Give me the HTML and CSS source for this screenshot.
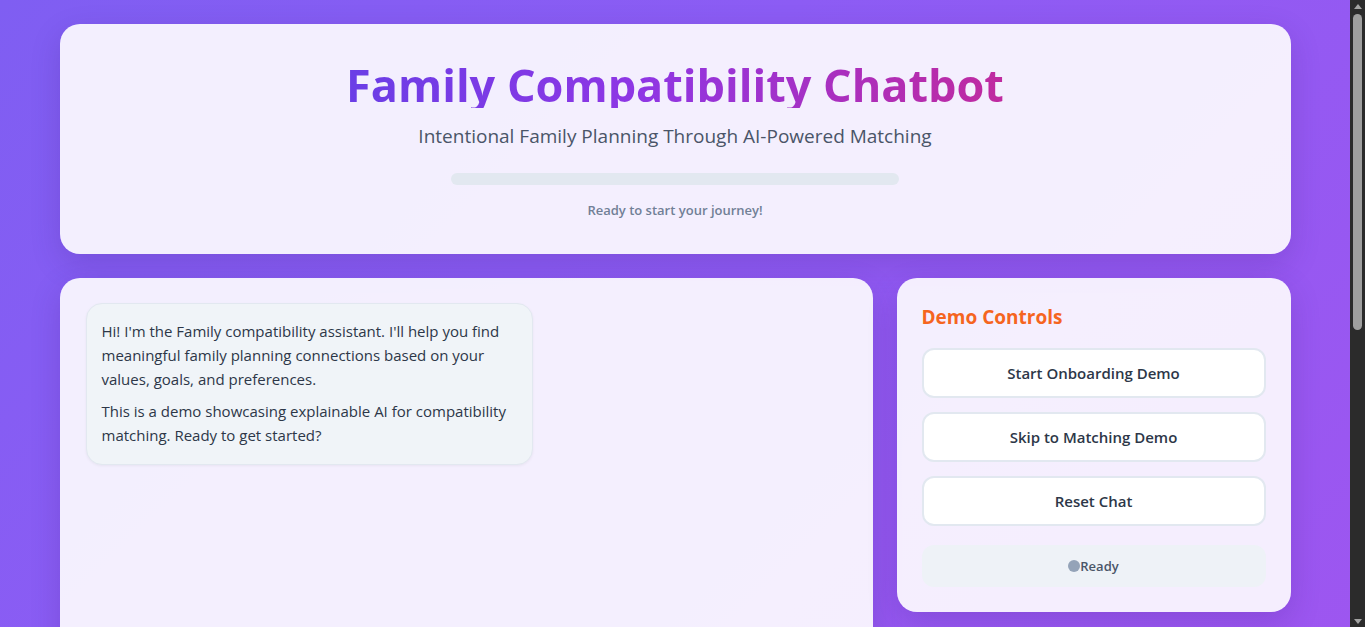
FILE: index.html
```html
<!DOCTYPE html>
<html lang="en">
<head>
<meta charset="utf-8">
<title>Family Compatibility Chatbot</title>
<link rel="stylesheet" href="styles.css">
</head>
<body>
<div class="app">
  <header class="card header">
    <h1 class="title">Family Compatibility Chatbot</h1>
    <p class="subtitle">Intentional Family Planning Through AI-Powered Matching</p>
    <div class="progress"><div class="progress-fill"></div></div>
    <p class="progress-text">Ready to start your journey!</p>
  </header>
  <main class="main">
    <section class="card chat">
      <div class="bubble">
        <p>Hi! I'm the Family compatibility assistant. I'll help you find meaningful family planning connections based on your values, goals, and preferences.</p>
        <p>This is a demo showcasing explainable AI for compatibility matching. Ready to get started?</p>
      </div>
    </section>
    <aside class="card sidebar">
      <h3 class="side-title">Demo Controls</h3>
      <div class="buttons">
        <button class="btn">Start Onboarding Demo</button>
        <button class="btn">Skip to Matching Demo</button>
        <button class="btn">Reset Chat</button>
      </div>
      <div class="status"><span class="dot"></span><span>Ready</span></div>
    </aside>
  </main>
</div>
<div class="scrollbar" aria-hidden="true">
  <span class="arrow arrow-up"></span>
  <span class="thumb"></span>
  <span class="arrow arrow-down"></span>
</div>
</body>
</html>
```
FILE: styles.css
```css
* { box-sizing: border-box; }
html {
  background: #2b2b2b;
}
body {
  margin: 0 15px 0 0;
  min-height: 100vh;
  font-family: "Open Sans", "Noto Sans", sans-serif;
  color: #2d3748;
  background: linear-gradient(135deg, #7f5ef2 0%, #8c5cf4 40%, #9d56f0 100%);
  background-attachment: fixed;
}
.app {
  max-width: 1231px;
  margin: 0 auto;
  padding: 24px 0 40px;
}
.card {
  background: rgba(255, 255, 255, 0.9);
  border-radius: 20px;
  box-shadow: 0 10px 30px rgba(50, 20, 110, 0.18);
}
.header {
  padding: 38px 40px 34px;
  text-align: center;
}
.title {
  display: inline-block;
  margin: 0;
  font-size: 45px;
  font-weight: 700;
  line-height: 46px;
  background: linear-gradient(90deg, #6a3ee6 0%, #8f36e4 45%, #c02a9f 100%);
  -webkit-background-clip: text;
  background-clip: text;
  color: transparent;
}
.subtitle {
  margin: 15px 0 0;
  font-size: 19px;
  line-height: 26px;
  color: #4a5568;
}
.progress {
  width: 448px;
  height: 12px;
  margin: 24px auto 0;
  border-radius: 6px;
  background: #e2e8f0;
  overflow: hidden;
}
.progress-fill { width: 0; height: 100%; }
.progress-text {
  margin: 15px 0 0;
  font-size: 13px;
  line-height: 20px;
  font-weight: 600;
  color: #718096;
}
.main {
  margin-top: 24px;
  display: grid;
  grid-template-columns: 1fr 394px;
  gap: 24px;
  align-items: start;
}
.chat {
  min-height: 880px;
  padding: 25px 26px;
}
.bubble {
  max-width: 447px;
  padding: 15px 15px 17px;
  background: #f0f4f8;
  border: 1px solid #e2e8f0;
  border-radius: 16px;
  box-shadow: 0 1px 3px rgba(0, 0, 0, 0.05);
  font-size: 15px;
  line-height: 24px;
  color: #2d3748;
}
.bubble p { margin: 0; }
.bubble p + p { margin-top: 8px; }
.sidebar {
  padding: 24px 25px 25px;
}
.side-title {
  margin: 0 0 15px;
  font-size: 19px;
  line-height: 31px;
  font-weight: 700;
  color: #f5651f;
}
.buttons {
  display: flex;
  flex-direction: column;
  gap: 14px;
}
.btn {
  height: 50px;
  border: 2px solid #e2e8f0;
  border-radius: 12px;
  background: #ffffff;
  font-family: inherit;
  font-size: 15px;
  font-weight: 600;
  color: #2d3748;
}
.status {
  margin-top: 19px;
  height: 42px;
  border-radius: 12px;
  background: #eef2f7;
  display: flex;
  align-items: center;
  justify-content: center;
  font-size: 13px;
  font-weight: 600;
  color: #4a5568;
}
.dot {
  width: 12px;
  height: 12px;
  border-radius: 50%;
  background: #94a3b8;
}
.scrollbar {
  position: fixed;
  top: 0;
  right: 0;
  width: 15px;
  height: 100vh;
  background: #2b2b2b;
  display: flex;
  flex-direction: column;
  align-items: center;
}
.thumb {
  width: 9px;
  height: 316px;
  margin-top: 5px;
  border-radius: 5px;
  background: #9f9f9f;
}
.arrow {
  width: 0;
  height: 0;
  border-left: 4px solid transparent;
  border-right: 4px solid transparent;
}
.arrow-up {
  margin-top: 4px;
  border-bottom: 5px solid #a3a3a3;
}
.arrow-down {
  margin-top: auto;
  margin-bottom: 3px;
  border-top: 5px solid #a3a3a3;
}
```
